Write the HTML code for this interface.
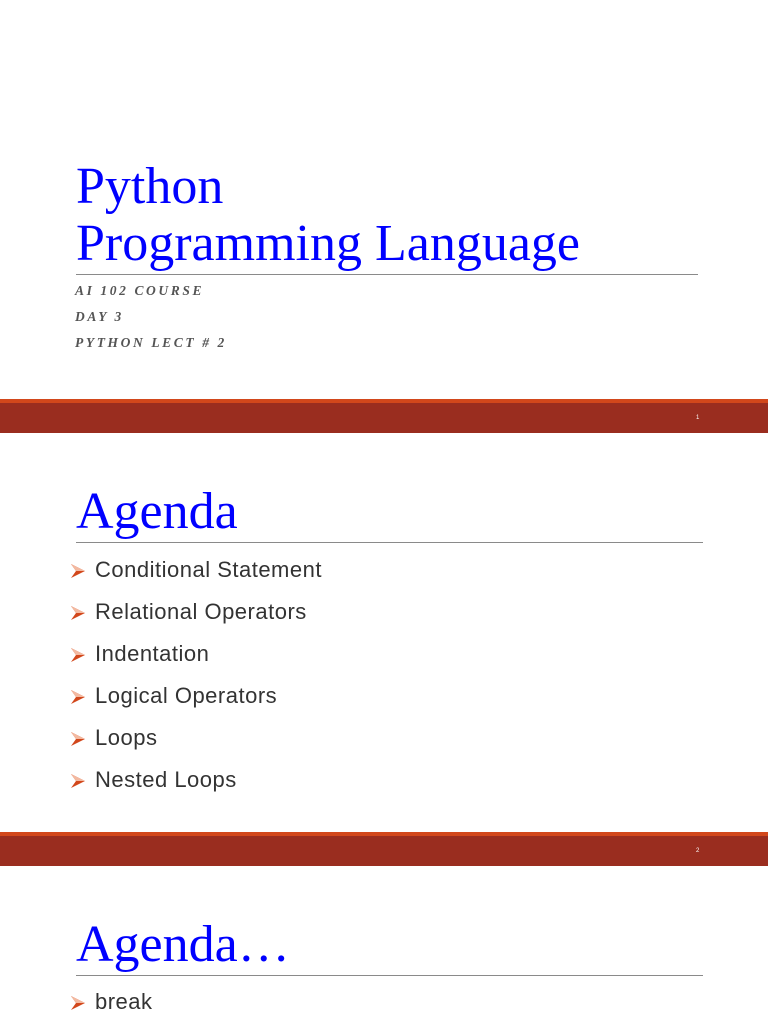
<!DOCTYPE html>
<html><head><meta charset="utf-8"><style>
body{margin:0;width:768px;height:1024px;overflow:hidden;background:#fff;position:relative;font-family:"Liberation Serif",serif}
.a{position:absolute;white-space:nowrap}
.t{color:#0000ff;font-family:"Liberation Serif",serif;font-size:52px;line-height:1}
.hr{position:absolute;height:1px;background:#8a8a8a}
.sub{color:#555;font-style:italic;font-weight:bold;font-size:13.5px;letter-spacing:2.6px;left:75px}
.bar{position:absolute;left:0;width:768px;height:34px;background:#9a2d1f;border-top:4px solid #d2471b;box-sizing:border-box}
.bar span{position:absolute;left:696px;top:12px;font:6px "Liberation Sans",sans-serif;color:#fff}
.li{position:absolute;left:70px;font-family:"Liberation Sans",sans-serif;font-size:22px;letter-spacing:0.5px;color:#333;line-height:1;white-space:nowrap;width:600px}
.li svg{position:absolute;left:0;top:3px}
.li b{font-weight:normal;position:absolute;left:25px;top:-1px;white-space:nowrap}
</style></head><body>
<div class="a t" style="left:76px;top:161px">Python</div>
<div class="a t" style="left:76px;top:218px">Programming Language</div>
<div class="hr" style="left:76px;top:274px;width:622px"></div>
<div class="a sub" style="top:283px">AI 102 COURSE</div>
<div class="a sub" style="top:309px">DAY 3</div>
<div class="a sub" style="top:335px">PYTHON LECT # 2</div>
<div class="bar" style="top:399px"><span>1</span></div>

<div class="a t" style="left:76px;top:486px">Agenda</div>
<div class="hr" style="left:76px;top:542px;width:627px"></div>

<div class="li" style="top:560px"><svg width="16" height="16" viewBox="0 0 16 16"><path d="M1 1 L15 8 L1 15 L6 8 Z" fill="#d2471b"/><path d="M1 1 L15 8 L6 8 Z" fill="#f3b9a0"/></svg><b>Conditional Statement</b></div>
<div class="li" style="top:602px"><svg width="16" height="16" viewBox="0 0 16 16"><path d="M1 1 L15 8 L1 15 L6 8 Z" fill="#d2471b"/><path d="M1 1 L15 8 L6 8 Z" fill="#f3b9a0"/></svg><b>Relational Operators</b></div>
<div class="li" style="top:644px"><svg width="16" height="16" viewBox="0 0 16 16"><path d="M1 1 L15 8 L1 15 L6 8 Z" fill="#d2471b"/><path d="M1 1 L15 8 L6 8 Z" fill="#f3b9a0"/></svg><b>Indentation</b></div>
<div class="li" style="top:686px"><svg width="16" height="16" viewBox="0 0 16 16"><path d="M1 1 L15 8 L1 15 L6 8 Z" fill="#d2471b"/><path d="M1 1 L15 8 L6 8 Z" fill="#f3b9a0"/></svg><b>Logical Operators</b></div>
<div class="li" style="top:728px"><svg width="16" height="16" viewBox="0 0 16 16"><path d="M1 1 L15 8 L1 15 L6 8 Z" fill="#d2471b"/><path d="M1 1 L15 8 L6 8 Z" fill="#f3b9a0"/></svg><b>Loops</b></div>
<div class="li" style="top:770px"><svg width="16" height="16" viewBox="0 0 16 16"><path d="M1 1 L15 8 L1 15 L6 8 Z" fill="#d2471b"/><path d="M1 1 L15 8 L6 8 Z" fill="#f3b9a0"/></svg><b>Nested Loops</b></div>

<div class="bar" style="top:832px"><span>2</span></div>

<div class="a t" style="left:76px;top:919px">Agenda…</div>
<div class="hr" style="left:76px;top:975px;width:627px"></div>
<div class="li" style="top:992px"><svg width="16" height="16" viewBox="0 0 16 16"><path d="M1 1 L15 8 L1 15 L6 8 Z" fill="#d2471b"/><path d="M1 1 L15 8 L6 8 Z" fill="#f3b9a0"/></svg><b>break</b></div>
</body></html>
